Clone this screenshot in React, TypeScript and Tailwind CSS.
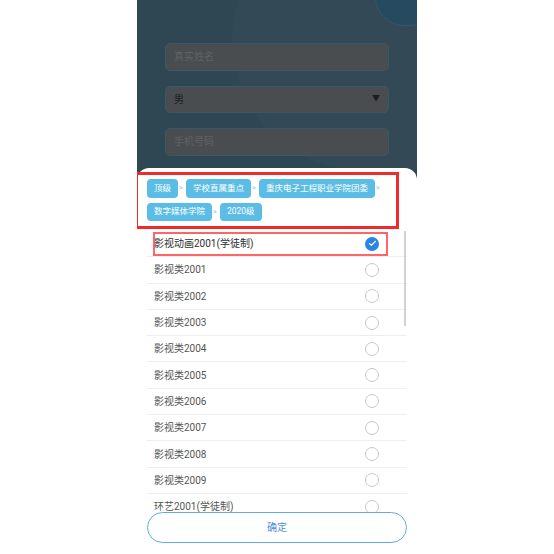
import { Check } from 'lucide-react';

const path = ['顶级', '学校直属重点', '重庆电子工程职业学院团委', '数字媒体学院', '2020级'];

const classes = [
  '影视动画2001(学徒制)',
  '影视类2001',
  '影视类2002',
  '影视类2003',
  '影视类2004',
  '影视类2005',
  '影视类2006',
  '影视类2007',
  '影视类2008',
  '影视类2009',
  '环艺2001(学徒制)',
];

const font = { fontFamily: 'Roboto, "Noto Sans CJK SC", sans-serif' };

function Field({ text, dark, arrow }: { text: string; dark?: boolean; arrow?: boolean }) {
  return (
    <div className="h-[27.5px] rounded-[5px] bg-[#4a4d4f] border border-[#3a5867] flex items-center justify-between pl-[8px] pr-[8px]">
      <span className={dark ? 'text-[10px] text-[#1c1c1c]' : 'text-[10px] text-[#5f6265]'}>{text}</span>
      {arrow && <span className="text-[8px] text-[#1c1c1c]">▼</span>}
    </div>
  );
}

function Marker() {
  // red annotation frame around the picked row
  return <div className="absolute left-[6px] right-[19px] top-[1px] bottom-0 border-2 border-solid border-red-400" />;
}

export default function App() {
  return (
    <div className="w-[554px] h-[554px] bg-white flex justify-center" style={font}>
      <div className="relative w-[280px] h-full bg-[#2f4653] flex flex-col overflow-hidden">
        <div className="absolute left-[95px] -top-[90px] w-[300px] h-[260px] rounded-full bg-white/[0.02]" />
        <div className="absolute -right-[22px] -top-[32px] w-[64px] h-[58px] rounded-full bg-[#264a60] border border-[#35566a]" />

        <div className="relative h-[168px] pt-[43px] px-[28px] flex flex-col gap-[15px]">
          <Field text="真实姓名" />
          <Field text="男" dark arrow />
          <Field text="手机号码" />
        </div>

        <div className="relative flex-1 bg-white rounded-t-[12px] px-[10px]">
          <div className="ml-[-12px] w-[264px] mt-[4px] border-[3px] border-[#f02b2b] pt-[4px] pl-[9px] pb-[5px] flex flex-wrap gap-y-[5px]">
            {path.map((p, i) => (
              <div key={p} className="flex items-center">
                <span className="h-[18.5px] px-[7px] rounded-[4px] bg-[#5bbde6] text-white text-[8.5px] flex items-center">
                  {p}
                </span>
                {i < path.length - 1 && (
                  <span className="w-[8px] pl-[1px] text-[7px] font-bold text-[#9fd2ea]">&gt;</span>
                )}
              </div>
            ))}
          </div>

          <div className="relative mt-[2px] h-[281px] overflow-hidden">
            {classes.map((c, i) => (
              <div
                key={c}
                className="relative h-[26.3px] border-b border-[#eeeeee] flex items-center justify-between pl-[7px] pr-[28px]"
              >
                <span className={i === 0 ? 'text-[10px] text-[#2e2e2e]' : 'text-[10px] text-[#555555]'}>{c}</span>
                {i === 0 ? (
                  <span className="w-[14px] h-[14px] rounded-full bg-[#2c84e8] flex items-center justify-center">
                    <Check size={9} strokeWidth={3} color="#ffffff" />
                  </span>
                ) : (
                  <span className="w-[14px] h-[14px] rounded-full border border-[#c8c8c8]" />
                )}
                {i === 0 && <Marker />}
              </div>
            ))}
            <div className="absolute right-[1px] top-0 h-[95px] w-[2px] bg-[#d2d2d2]" />
          </div>

          <button className="w-full h-[31px] rounded-full border-[1.5px] border-[#62ace6] bg-white text-[10px] text-[#4a8fd8]">
            确定
          </button>
        </div>
      </div>
    </div>
  );
}
